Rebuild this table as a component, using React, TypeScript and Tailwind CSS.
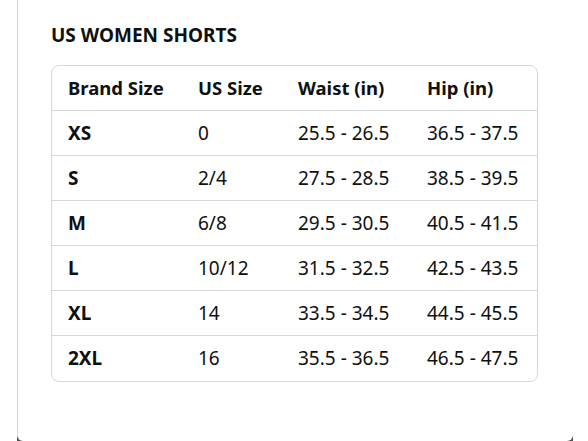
import React from 'react';

const ROWS = [
  ['XS', '0', '25.5 - 26.5', '36.5 - 37.5'],
  ['S', '2/4', '27.5 - 28.5', '38.5 - 39.5'],
  ['M', '6/8', '29.5 - 30.5', '40.5 - 41.5'],
  ['L', '10/12', '31.5 - 32.5', '42.5 - 43.5'],
  ['XL', '14', '33.5 - 34.5', '44.5 - 45.5'],
  ['2XL', '16', '35.5 - 36.5', '46.5 - 47.5'],
];

const HEAD = ['Brand Size', 'US Size', 'Waist (in)', 'Hip (in)'];

export default function App() {
  return (
    <div className="relative w-[588px] h-[441px] bg-white overflow-hidden text-[#0f1111] font-['Noto_Sans',sans-serif]">
      {/* backdrop showing through the rounded bottom corners */}
      <div className="absolute left-[17px] bottom-0 w-[556px] h-[6px] bg-[#505050]" />
      <div className="relative ml-[17px] w-[556px] h-full bg-white border-l border-[#d5d9d9] rounded-b-[6px] pl-[33px] pt-[22px]">
        <h2 className="text-[19px] leading-[26px] font-bold">US WOMEN SHORTS</h2>
        <div className="mt-[17px] w-[487px] border border-[#d5d9d9] rounded-[8px] overflow-hidden">
          <div className="grid grid-cols-[130px_100px_129px_1fr] h-[45px] border-b border-[#d5d9d9] items-center text-[18.5px] font-bold">
            {HEAD.map(h => (
              <div key={h} className="pl-[16px]">{h}</div>
            ))}
          </div>
          {ROWS.map((r, i) => (
            <div
              key={r[0]}
              className={`grid grid-cols-[130px_100px_129px_1fr] h-[45px] items-center text-[19px] ${i < ROWS.length - 1 ? 'border-b border-[#d5d9d9]' : ''}`}
            >
              <div className="pl-[16px] font-bold">{r[0]}</div>
              <div className="pl-[16px]">{r[1]}</div>
              <div className="pl-[16px]">{r[2]}</div>
              <div className="pl-[16px]">{r[3]}</div>
            </div>
          ))}
        </div>
      </div>
    </div>
  );
}
